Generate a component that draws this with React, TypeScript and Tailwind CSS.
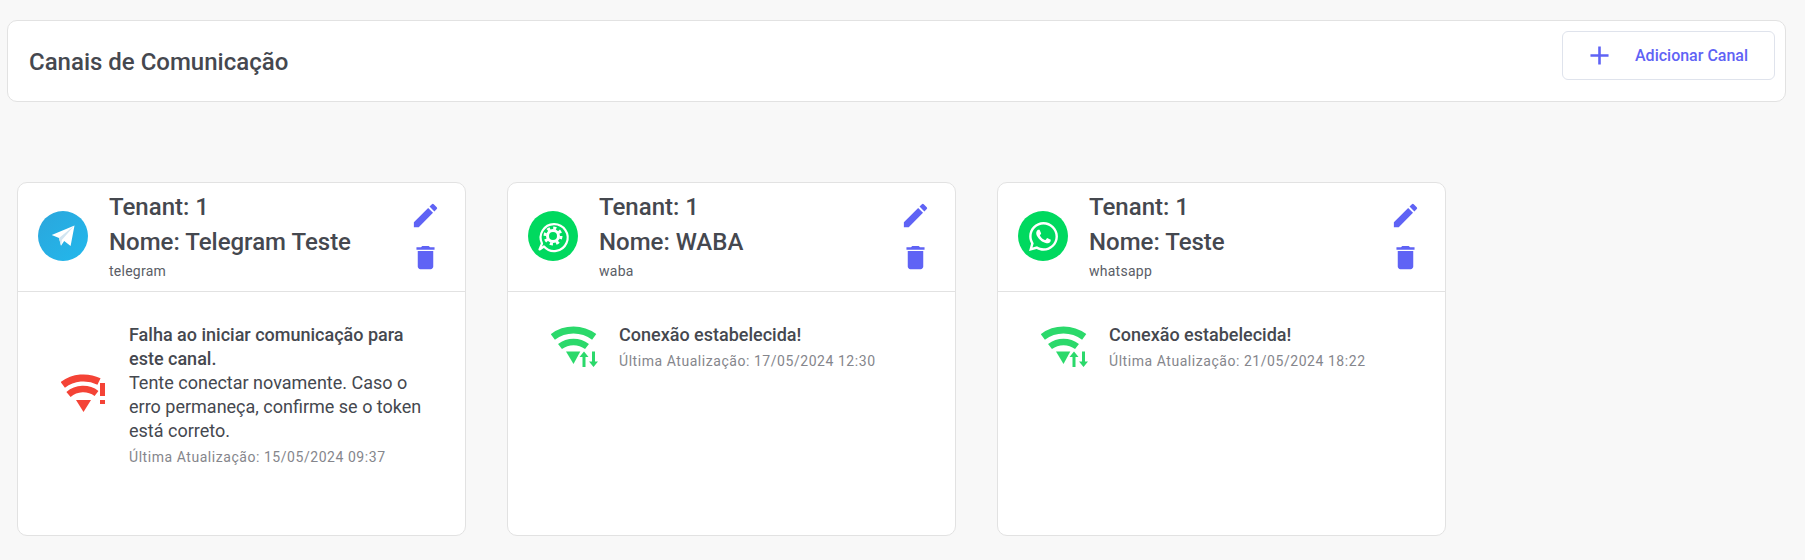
import type { ReactNode } from 'react';
import { FaWhatsapp } from 'react-icons/fa';
import { MdAdd, MdDelete, MdEdit } from 'react-icons/md';

function TelegramLogo() {
  return (
    <svg viewBox="0 0 50 50" className="h-[50px] w-[50px] shrink-0">
      <defs>
        <linearGradient id="tg" x1="0" y1="0" x2="1" y2="1">
          <stop offset="0" stopColor="#2ba6dc" />
          <stop offset="1" stopColor="#22b8ec" />
        </linearGradient>
      </defs>
      <circle cx="25" cy="25" r="25" fill="url(#tg)" />
      <path d="M36.5 14.5 13.7 24l7.3 3 2 7.7 3.2-4.6 6.4 4.8z" fill="#fff" />
      <path d="M36.5 14.5 21 27l2 7.7.8-5.7z" fill="#d2e5f1" />
    </svg>
  );
}

function WabaLogo() {
  return (
    <svg viewBox="0 0 50 50" className="h-[50px] w-[50px] shrink-0">
      <circle cx="25" cy="25" r="25" fill="#00d95f" />
      <path
        d="M16 35.5A13.5 13.5 0 1 0 14 32.5L11.5 38.5Z"
        fill="none"
        stroke="#fff"
        strokeWidth="2.2"
        strokeLinejoin="round"
      />
      <circle cx="25" cy="25" r="5.5" fill="none" stroke="#fff" strokeWidth="3" />
      <circle cx="25" cy="25" r="8" fill="none" stroke="#fff" strokeWidth="3" strokeDasharray="3.1 3.18" />
    </svg>
  );
}

function WhatsappLogo() {
  return (
    <div className="flex h-[50px] w-[50px] shrink-0 items-center justify-center rounded-full bg-[#00d95f] text-white">
      <FaWhatsapp size={33} />
    </div>
  );
}

function WifiOk() {
  return (
    <svg viewBox="0 0 48 42" className="h-[42px] w-[48px] shrink-0" fill="none" stroke="#2bd96b">
      <path d="M1.8 10.9A34.5 34.5 0 0 1 43.2 10.9" strokeWidth="7" />
      <path d="M9 20.5A22.5 22.5 0 0 1 36 20.5" strokeWidth="6.5" />
      <g fill="#2bd96b" stroke="none">
        <path d="M15 25.5h14.3L22.5 38z" />
        <path d="M28.5 31 33 25.5 37.5 31h-3v10h-3V31z" />
        <path d="M38 35.500 42.500 41 47 35.500h-3V25.500h-3v10z" />
      </g>
    </svg>
  );
}

function WifiFail() {
  return (
    <svg viewBox="0 0 48 42" className="h-[42px] w-[48px] shrink-0" fill="none" stroke="#f44336">
      <path d="M1.800 10.900A34.500 34.500 0 0 1 38 7.500" strokeWidth="7" />
      <path d="M7.500 20.500A22.500 22.500 0 0 1 35.500 19.500" strokeWidth="6.500" />
      <g fill="#f44336" stroke="none">
        <path d="M15 26h15L22.500 38z" />
        <rect x="39" y="9" width="5" height="13" />
        <rect x="39" y="26" width="5" height="4" />
      </g>
    </svg>
  );
}

function Canal({
  logo,
  nome,
  tipo,
  icon,
  children,
}: {
  logo: ReactNode;
  nome: string;
  tipo: string;
  icon: ReactNode;
  children: ReactNode;
}) {
  return (
    <div className="h-[354px] w-[449px] rounded-[10px] border border-[#e2e2e2] bg-white">
      <div className="flex h-[109px] items-start border-b border-[#e2e2e2] pl-5 pr-6">
        <div className="mt-[28px]">{logo}</div>
        <div className="ml-[21px] flex-1 pt-[7px] text-[24px] font-medium leading-[35px] text-[#45484f]">
          <div>Tenant: 1</div>
          <div>Nome: {nome}</div>
          <div className="mt-[1px] text-[14px] font-normal leading-5 tracking-[0.25px] text-[#5a5d66]">{tipo}</div>
        </div>
        <div className="mt-[17px] flex flex-col gap-[11px] text-[#5f63f5]">
          <MdEdit size={31} />
          <MdDelete size={31} />
        </div>
      </div>
      <div className="flex items-center gap-5 pl-[43px] pr-8 pt-[31px]">
        {icon}
        <div className="text-[18px] leading-6 text-[#45484f]">{children}</div>
      </div>
    </div>
  );
}

function Atualizacao({ data }: { data: string }) {
  return <div className="mt-1 text-[14px] leading-5 tracking-[0.55px] text-[#85868c]">Última Atualização: {data}</div>;
}

export default function App() {
  return (
    <div className="h-screen overflow-hidden bg-[#f8f8f8] pl-[7px] pt-5 font-['Roboto',sans-serif]">
      <div className="flex h-[82px] w-[1779px] items-start justify-between rounded-[10px] border border-[#e2e2e2] bg-white pl-[21px] pr-[10px] pt-[10px]">
        <h1 className="mt-[15px] text-[24px] font-medium leading-[32px] text-[#45484f]">Canais de Comunicação</h1>
        <button className="flex h-[49px] w-[213px] items-center rounded-[6px] border border-[#dfe3ec] bg-white pl-[21px] text-[16px] font-medium text-[#5f63f5]">
          <MdAdd size={31} />
          <span className="ml-[20px]">Adicionar Canal</span>
        </button>
      </div>

      <div className="ml-[10px] mt-[80px] flex gap-[41px]">
        <Canal logo={<TelegramLogo />} nome="Telegram Teste" tipo="telegram" icon={<WifiFail />}>
          <div className="font-medium">Falha ao iniciar comunicação para este canal.</div>
          <div>Tente conectar novamente. Caso o erro permaneça, confirme se o token está correto.</div>
          <Atualizacao data="15/05/2024 09:37" />
        </Canal>
        <Canal logo={<WabaLogo />} nome="WABA" tipo="waba" icon={<WifiOk />}>
          <div className="font-medium">Conexão estabelecida!</div>
          <Atualizacao data="17/05/2024 12:30" />
        </Canal>
        <Canal logo={<WhatsappLogo />} nome="Teste" tipo="whatsapp" icon={<WifiOk />}>
          <div className="font-medium">Conexão estabelecida!</div>
          <Atualizacao data="21/05/2024 18:22" />
        </Canal>
      </div>
    </div>
  );
}
